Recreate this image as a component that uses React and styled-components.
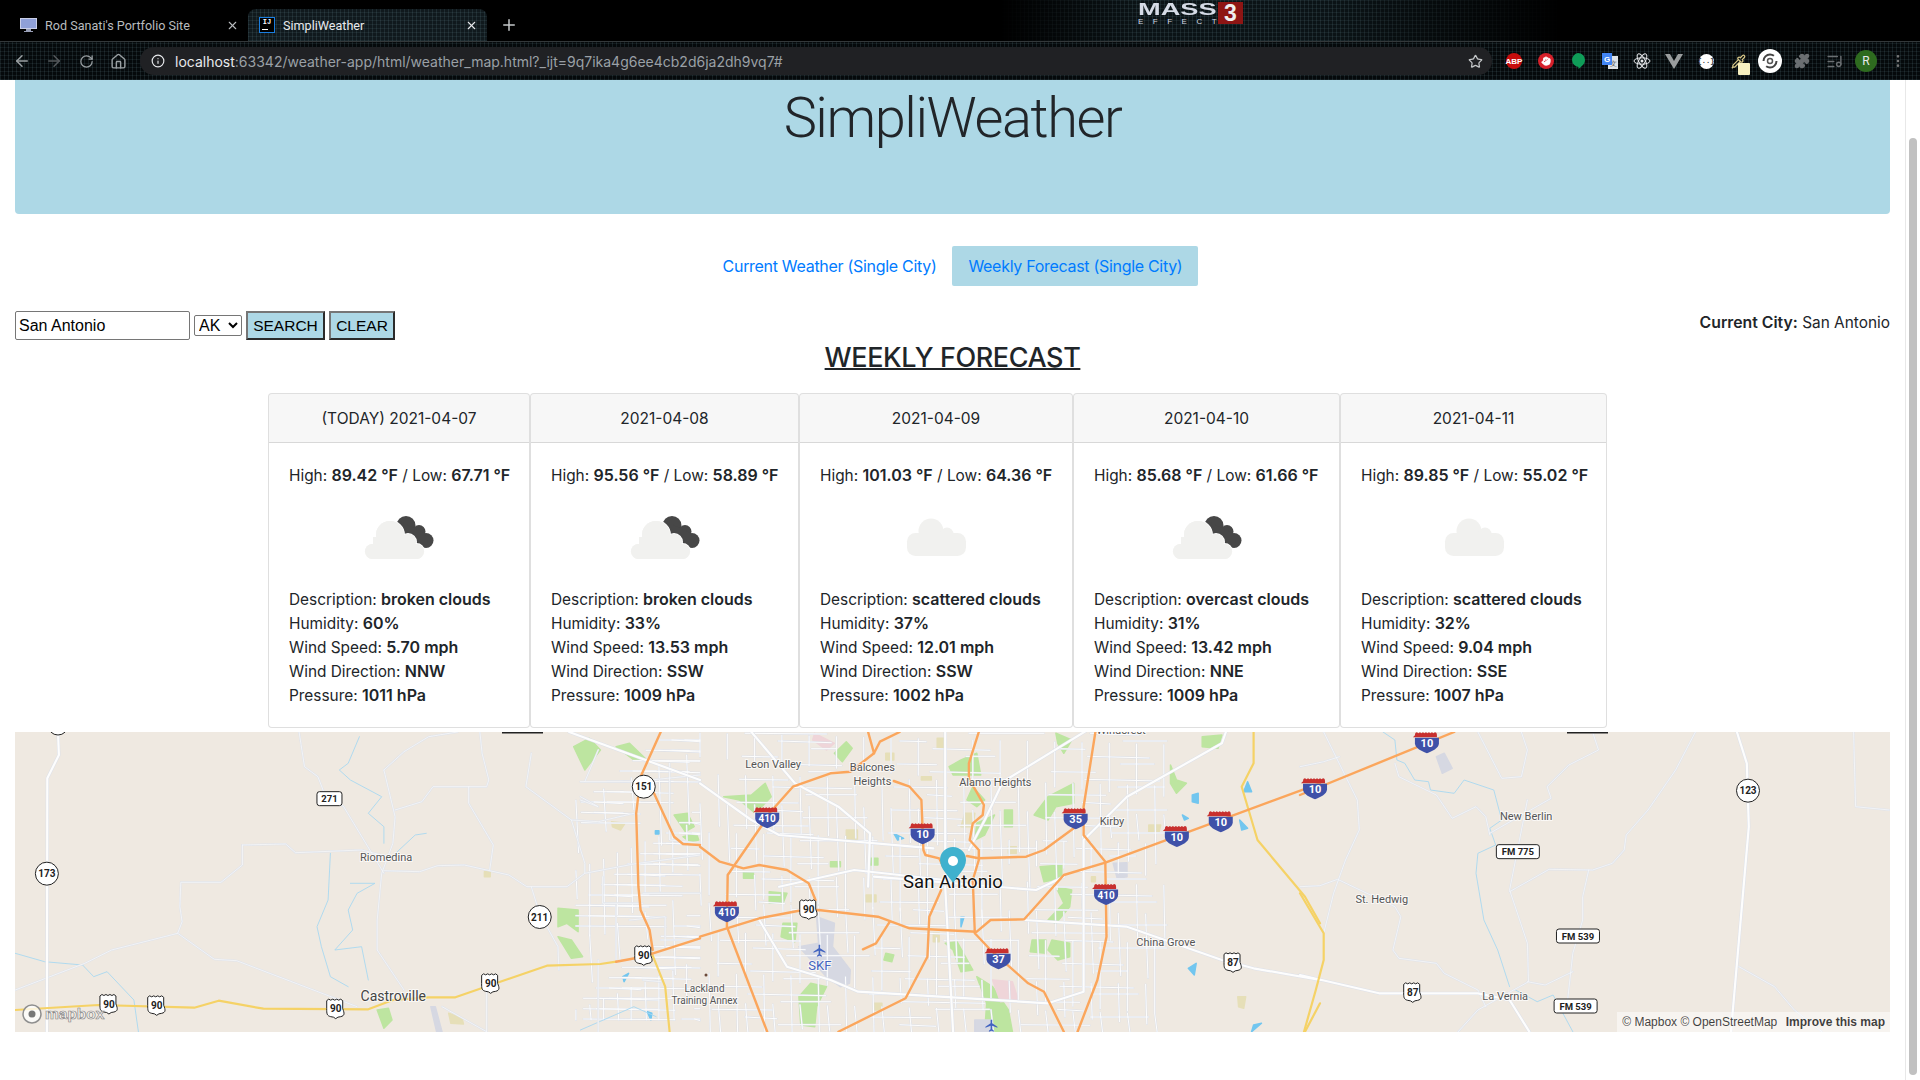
import React from "react";
import styled, { createGlobalStyle, css } from "styled-components";
import {
  ArrowLeft,
  ArrowRight,
  Hand,
  Home,
  Info,
  ListMusic,
  MoreVertical,
  Pipette,
  Plus,
  Puzzle,
  RotateCw,
  Star,
  X,
} from "lucide-react";

const GlobalStyle = createGlobalStyle`
  html, body { margin: 0; padding: 0; height: 100%; overflow: hidden; background: #fff; }
  body { font-family: Inter, "Liberation Sans", sans-serif; font-size: 16px; color: #212529; }
  * { box-sizing: border-box; }
`;

/* ---------- browser chrome ---------- */

const texture = css`
  background-color: #0b1316;
  background-image: repeating-linear-gradient(90deg, rgba(120, 160, 170, 0.14) 0 1px, transparent 1px 4px),
    repeating-linear-gradient(0deg, rgba(120, 160, 170, 0.11) 0 1px, transparent 1px 4px);
`;

const Chrome = styled.header`
  height: 80px;
  background: #000;
  position: relative;
`;

const TabStrip = styled.div`
  height: 42px;
  padding: 9px 0 0 8px;
  display: flex;
  align-items: stretch;
  border-bottom: 1px solid #33383a;
  background: #000;
  position: relative;
`;

const ThemeGlow = styled.div`
  position: absolute;
  top: 0;
  bottom: 0;
  left: 1000px;
  width: 560px;
  ${texture}
  mask-image: linear-gradient(90deg, transparent, #000 25%, #000 60%, transparent);
`;

const Tab = styled.div`
  width: ${(p) => (p.$active ? "239px" : "240px")};
  display: flex;
  align-items: center;
  padding: 0 9px 0 ${(p) => (p.$active ? "11px" : "12px")};
  gap: 8px;
  font: 12.600px Roboto, "Liberation Sans", sans-serif;
  color: ${(p) => (p.$active ? "#e8eaed" : "#b9bcbf")};
  border-radius: 8px 8px 0 0;
  position: relative;
  z-index: 1;
  ${(p) => p.$active && texture}
  ${(p) => p.$active && "background-color: #10191d;"}
`;

const TabTitle = styled.span`
  flex: 1;
  white-space: nowrap;
`;

const NewTab = styled.div`
  width: 44px;
  display: flex;
  align-items: center;
  justify-content: center;
  color: #c4c7c9;
  position: relative;
  z-index: 1;
`;

const IdeaIcon = styled.div`
  width: 16px;
  height: 16px;
  background: #000;
  border: 1px solid #1a7ee0;
  color: #fff;
  font: bold 7px/9px "Liberation Mono", monospace;
  text-align: center;
  position: relative;
  &::after {
    content: "";
    position: absolute;
    left: 2px;
    bottom: 2px;
    width: 6px;
    height: 1px;
    background: #fff;
  }
`;

const GameLogo = styled.div`
  position: absolute;
  left: 1138px;
  top: 2px;
  display: flex;
  gap: 2px;
  z-index: 1;
  color: #d6dbe6;
  font-family: "Liberation Sans", sans-serif;
  font-weight: bold;
`;

const LogoWords = styled.div`
  width: 78px;
  padding-top: 1px;
  font-size: 17px;
  line-height: 14px;
  span {
    display: block;
    transform: scaleX(1.600);
    transform-origin: left;
    white-space: nowrap;
  }
  small {
    display: block;
    font-size: 8px;
    line-height: 8px;
    letter-spacing: 9.500px;
    margin-top: 1px;
    font-weight: normal;
  }
`;

const LogoThree = styled.div`
  width: 25px;
  height: 22px;
  background: #8e1514;
  color: #eee;
  font-size: 23px;
  line-height: 22px;
  text-align: center;
`;

const Toolbar = styled.div`
  height: 38px;
  display: flex;
  align-items: center;
  padding: 0 6px;
  position: relative;
  ${texture}
  background-color: #05090b;
`;

const ToolButton = styled.div`
  width: 32px;
  height: 32px;
  flex: none;
  display: flex;
  align-items: center;
  justify-content: center;
  color: ${(p) => p.$color || "#9aa0a3"};
  position: relative;
`;

const Omnibox = styled.div`
  flex: 1;
  height: 28px;
  margin: 0 6px;
  border-radius: 14px;
  background: #202124;
  display: flex;
  align-items: center;
  padding: 0 9px 0 11px;
  gap: 10px;
  font: 14px Inter, Roboto, "Liberation Sans", sans-serif;
  color: #9aa0a6;
  white-space: nowrap;
  b { font-weight: 400; color: #e8eaed; }
`;

const UrlText = styled.span`
  flex: 1;
`;

const Badge = styled.div`
  width: ${(p) => p.$size || 16}px;
  height: ${(p) => p.$size || 16}px;
  border-radius: 50%;
  background: ${(p) => p.$bg};
  color: ${(p) => p.$color || "#fff"};
  display: flex;
  align-items: center;
  justify-content: center;
  font: ${(p) => p.$font || "bold 8px 'Liberation Sans', sans-serif"};
`;

const StickyNote = styled.div`
  position: absolute;
  left: 16px;
  top: 18px;
  width: 12px;
  height: 12px;
  background: #f7f0c0;
  border-radius: 1px;
`;

const Translate = () => (
  <svg width="18" height="18" viewBox="0 0 18 18">
    <rect x="7" y="4" width="10" height="13" fill="#dfe3e8" />
    <text x="12" y="14" fontSize="7" fontFamily="Liberation Sans" textAnchor="middle" fill="#555">文</text>
    <rect x="1" y="1" width="10" height="12" fill="#4285f4" />
    <text x="6" y="10" fontSize="8" fontWeight="bold" fontFamily="Liberation Sans" textAnchor="middle" fill="#fff">G</text>
  </svg>
);

const Hangouts = () => (
  <svg width="16" height="18" viewBox="0 0 16 18">
    <path d="M8 1a7 7 0 0 1 7 7c0 4-3.500 6.500-6.500 9v-2.100A7 7 0 0 1 8 1z" fill="#0f9d58" />
  </svg>
);

const ReactMark = () => (
  <svg width="18" height="18" viewBox="-9 -9 18 18" fill="none" stroke="#e8eaed" strokeWidth="1">
    <circle r="1.500" fill="#e8eaed" stroke="none" />
    <ellipse rx="8" ry="3.200" />
    <ellipse rx="8" ry="3.200" transform="rotate(60)" />
    <ellipse rx="8" ry="3.200" transform="rotate(120)" />
  </svg>
);

const VueMark = () => (
  <svg width="18" height="16" viewBox="0 0 18 16">
    <path d="M0 1h5l4 7 4-7h5L9 16z" fill="#9a9d9e" />
  </svg>
);

const SyncMark = () => (
  <svg width="24" height="24" viewBox="0 0 24 24">
    <circle cx="12" cy="12" r="12" fill="#fff" />
    <circle cx="12" cy="12" r="6.500" fill="none" stroke="#444" strokeWidth="2" strokeDasharray="14 6" />
    <circle cx="12" cy="12" r="2.500" fill="none" stroke="#555" strokeWidth="1.500" />
  </svg>
);

const Monitor = () => (
  <svg width="17" height="16" viewBox="0 0 17 16">
    <rect x="0" y="1" width="17" height="11" fill="#c9cfe8" />
    <rect x="1" y="2" width="15" height="9" fill="#8fa0d8" />
    <rect x="6" y="12" width="5" height="2" fill="#9aa0b8" />
    <rect x="4" y="14" width="9" height="1" fill="#9aa0b8" />
  </svg>
);

const BrowserChrome = () => (
  <Chrome>
    <TabStrip>
      <ThemeGlow />
      <Tab>
        <Monitor />
        <TabTitle>Rod Sanati's Portfolio Site</TabTitle>
        <X size={13} />
      </Tab>
      <Tab $active>
        <IdeaIcon>IJ</IdeaIcon>
        <TabTitle>SimpliWeather</TabTitle>
        <X size={13} />
      </Tab>
      <NewTab>
        <Plus size={18} />
      </NewTab>
      <GameLogo>
        <LogoWords>
          <span>MASS</span>
          <small>EFFECT</small>
        </LogoWords>
        <LogoThree>3</LogoThree>
      </GameLogo>
    </TabStrip>
    <Toolbar>
      <ToolButton><ArrowLeft size={18} /></ToolButton>
      <ToolButton $color="#55595c"><ArrowRight size={18} /></ToolButton>
      <ToolButton><RotateCw size={15} /></ToolButton>
      <ToolButton><Home size={17} /></ToolButton>
      <Omnibox>
        <Info size={14} color="#e8eaed" />
        <UrlText>
          <b>localhost</b>:63342/weather-app/html/weather_map.html?_ijt=9q7ika4g6ee4cb2d6ja2dh9vq7#
        </UrlText>
        <Star size={15} color="#c4c7c9" />
      </Omnibox>
      <ToolButton><Badge $bg="#c70d0d">ABP</Badge></ToolButton>
      <ToolButton><Badge $bg="#d6202a"><Hand size={10} fill="#fff" color="#fff" /></Badge></ToolButton>
      <ToolButton><Hangouts /></ToolButton>
      <ToolButton><Translate /></ToolButton>
      <ToolButton><ReactMark /></ToolButton>
      <ToolButton><VueMark /></ToolButton>
      <ToolButton><Badge $bg="#fff" $color="#333" $font="bold 7px 'Liberation Mono', monospace" $size={15}>{"{..}"}</Badge></ToolButton>
      <ToolButton $color="#d8c98a">
        <Pipette size={15} />
        <StickyNote />
      </ToolButton>
      <ToolButton><SyncMark /></ToolButton>
      <ToolButton $color="#6b6f72"><Puzzle size={16} fill="#6b6f72" /></ToolButton>
      <ToolButton $color="#6b6f72"><ListMusic size={17} /></ToolButton>
      <ToolButton><Badge $bg="#2e6b1f" $color="#e8eaed" $font="12px Roboto, sans-serif" $size={22}>R</Badge></ToolButton>
      <ToolButton $color="#777"><MoreVertical size={16} /></ToolButton>
    </Toolbar>
  </Chrome>
);

/* ---------- page ---------- */

const Viewport = styled.div`
  display: flex;
  height: 1000px;
`;

const Page = styled.main`
  flex: 1;
  min-width: 0;
  padding: 0 15px;
`;

const Scrollbar = styled.div`
  width: 15px;
  flex: none;
  border-left: 1px solid #e8e8e8;
  padding: 58px 3px 5px 3px;
`;

const ScrollThumb = styled.div`
  height: 100%;
  background: #c1c1c1;
  border-radius: 4px;
`;

const Hero = styled.section`
  height: 134px;
  background: #add8e6;
  border-radius: 0 0 4px 4px;
  text-align: center;
`;

const Title = styled.h1`
  margin: 0;
  font-family: Roboto, Inter, sans-serif;
  font-size: 56px;
  font-weight: 300;
  line-height: 76px;
  letter-spacing: -1.450px;
`;

const Nav = styled.nav`
  display: flex;
  justify-content: center;
  margin-top: 32px;
`;

const NavLink = styled.a`
  padding: 8px 16px;
  line-height: 24px;
  letter-spacing: -0.3px;
  color: #007bff;
  border-radius: 2px;
  background: ${(p) => (p.$active ? "#add8e6" : "transparent")};
`;

const SearchRow = styled.div`
  display: flex;
  justify-content: space-between;
  align-items: flex-start;
  margin-top: 25px;
`;

const SearchForm = styled.form`
  display: flex;
  align-items: center;
  gap: 4px;
  font-family: "Liberation Sans", Arial, sans-serif;
`;

const CityInput = styled.input`
  width: 175px;
  height: 29px;
  padding: 1px 3px;
  font: 16px "Liberation Sans", Arial, sans-serif;
  color: #000;
  border: 1px solid #767676;
  border-radius: 2px;
`;

const StateSelect = styled.select`
  width: 48px;
  height: 21px;
  font: 16px "Liberation Sans", Arial, sans-serif;
  color: #000;
  background: #fff;
  border: 1px solid #767676;
  border-radius: 2px;
`;

const FormButton = styled.button`
  height: 29px;
  width: ${(p) => p.$width}px;
  padding: 0;
  font: 15.500px "Liberation Sans", Arial, sans-serif;
  color: #000;
  background: #add8e6;
  border: 2px solid;
  border-color: #767676 #2b2b2b #2b2b2b #767676;
`;

const CurrentCity = styled.div`
  line-height: 24px;
  font-size: 15.400px;
  b { font-size: 15.800px; font-weight: 600; line-height: 1; }
`;

const Heading = styled.h2`
  margin: 1px 0 18px;
  text-align: center;
  font-size: 27px;
  line-height: 34px;
  font-weight: 500;
  letter-spacing: -0.4px;
  text-decoration: underline;
  text-decoration-thickness: 2px;
`;

const CardGroup = styled.div`
  display: grid;
  grid-template-columns: 262px 269px 274px 267px 267px;
  margin-left: 253px;
  width: 1339px;
`;

const Card = styled.article`
  border: 1px solid rgba(0, 0, 0, 0.125);
  border-radius: 4px;
  background: #fff;
  overflow: hidden;
`;

const CardHead = styled.div`
  height: 49px;
  line-height: 50px;
  text-align: center;
  background: rgba(0, 0, 0, 0.03);
  border-bottom: 1px solid rgba(0, 0, 0, 0.125);
  font-size: 15.500px;
`;

const CardBody = styled.div`
  padding: 21px 20px 19px;
  font-size: 15.400px;
  line-height: 24px;
  white-space: nowrap;
  b { font-size: 16px; font-weight: 600; line-height: 1; }
`;

const IconBox = styled.div`
  height: 100px;
  margin-top: -1px;
  margin-bottom: 1px;
  display: flex;
  justify-content: center;
`;

const Line = styled.div`
  height: 24px;
`;

/* icons as on openweathermap: 03d (scattered), 04d (broken) */
const WeatherIcon = ({ dark }) => (
  <svg width="100" height="100" viewBox="0 0 100 100">
    {dark ? (
      <g>
        <g fill="#474747">
          <circle cx="57" cy="38.500" r="9.500" />
          <circle cx="70" cy="44.500" r="6.500" />
          <circle cx="77" cy="53.500" r="7.500" />
          <path d="M50 34 L76 46 L80 60 L66 60 L46 44z" />
        </g>
        <g fill="#f1f1ef" stroke="#fff" strokeWidth="2" paintOrder="stroke">
          <circle cx="41" cy="48" r="14" />
          <circle cx="59" cy="55" r="8" />
          <rect x="16" y="57" width="59" height="15" rx="7.500" />
        </g>
        <g fill="#f1f1ef">
          <circle cx="41" cy="48" r="14" />
          <circle cx="59" cy="55" r="8" />
          <rect x="16" y="57" width="59" height="15" rx="7.500" />
          <rect x="24" y="50" width="40" height="15" />
        </g>
      </g>
    ) : (
      <g fill="#f1f1ef">
        <circle cx="45" cy="44" r="12.500" />
        <circle cx="61" cy="47" r="6.500" />
        <rect x="21" y="46" width="59" height="23" rx="8.500" />
      </g>
    )}
  </svg>
);

const days = [
  { date: "(TODAY) 2021-04-07", high: "89.42", low: "67.71", dark: true, desc: "broken clouds", hum: "60%", speed: "5.70 mph", dir: "NNW", press: "1011 hPa" },
  { date: "2021-04-08", high: "95.56", low: "58.89", dark: true, desc: "broken clouds", hum: "33%", speed: "13.53 mph", dir: "SSW", press: "1009 hPa" },
  { date: "2021-04-09", high: "101.03", low: "64.36", dark: false, desc: "scattered clouds", hum: "37%", speed: "12.01 mph", dir: "SSW", press: "1002 hPa" },
  { date: "2021-04-10", high: "85.68", low: "61.66", dark: true, desc: "overcast clouds", hum: "31%", speed: "13.42 mph", dir: "NNE", press: "1009 hPa" },
  { date: "2021-04-11", high: "89.85", low: "55.02", dark: false, desc: "scattered clouds", hum: "32%", speed: "9.04 mph", dir: "SSE", press: "1007 hPa" },
];

/* ---------- map ---------- */

const MapBox = styled.section`
  margin-top: 4px;
  height: 300px;
  background: #efe9e1;
  position: relative;
  overflow: hidden;
  svg { display: block; }
`;

const Attribution = styled.div`
  position: absolute;
  right: 0;
  bottom: 0;
  height: 20px;
  padding: 0 5px;
  background: rgba(255, 255, 255, 0.5);
  font: 12px/20px "Liberation Sans", Arial, sans-serif;
  color: rgba(0, 0, 0, 0.75);
  b { margin-left: 5px; }
`;

// coordinates below were read off three crops of the map, each with its own scale
const zones = { a: [0, 2.24], b: [700, 2.529], c: [1300, 2.529] };
const at = (z, x, y) => [zones[z][0] + x / zones[z][1], 720 + y / 3];
const pts = (z, s) =>
  s
    .trim()
    .split(/\s+/)
    .map((p) => {
      const [x, y] = p.split(",").map(Number);
      return at(z, x, y).map((n) => n.toFixed(1)).join(",");
    })
    .join(" ");

const minor = {
  a: [
    "670,36 682,140 712,170 725,215 770,260 815,360 860,460",
    "543,375 640,372 662,398 810,390 870,410",
    "543,375 543,435 495,487 405,487 403,560 408,605 398,640 250,690 190,730 34,810",
    "398,640 480,718 530,722 800,860",
    "860,150 885,290 880,370 855,460 845,600 845,690 905,810",
    "860,452 940,455 980,437 1040,435 1140,465 1180,500 1270,500 1310,460 1420,432 1568,405",
    "1190,500 1205,565",
    "885,270 945,245 970,200 1090,200 1095,180 1080,100 1075,36",
    "860,150 905,95 960,50 1025,36",
    "1050,200 1050,250 1105,375 1097,450",
    "1190,100 1178,200 1280,300 1310,430 1310,460",
    "1280,300 1340,305 1420,280",
    "1340,720 1340,935",
    "1090,815 1090,935",
    "990,860 1090,935",
    "1225,620 1250,680 1252,750",
    "1350,470 1350,550 1440,550",
    "1300,185 1420,185 1568,165",
    "1340,90 1310,185",
    "1440,780 1480,785",
    "1380,555 1380,720",
    "1480,660 1568,660",
    "1410,600 1490,590 1490,680",
    "1500,130 1500,360 1568,370",
    "1440,520 1568,520",
    "1300,240 1340,260 1300,230",
  ],
  c: [
    "60,36 145,240 150,330 115,420 85,520 60,640",
    "0,500 50,497 95,478 240,560 255,590 235,690 250,715 345,730 365,760 450,810 470,860",
    "450,36 510,175 560,170 575,90 560,36",
    "575,240 530,510 575,670 578,785 540,810 450,870 400,935",
    "530,515 630,448 740,450 790,430 820,390 825,345 880,270 950,150 1000,36",
    "730,450 715,530 715,600 690,700 675,860",
    "575,785 620,795 690,755",
    "480,340 635,235 625,200 680,135 755,90 740,36",
    "1110,740 1200,800 1250,870 1320,935",
    "1400,36 1405,260 1490,270",
    "0,140 60,125 100,110",
    "240,130 250,170 345,225 385,295 445,260 470,290 480,345",
  ],
};

const major = {
  a: ["130,36 132,105 106,175 105,935", "1275,36 1568,180"],
  b: [
    "0,190 130,300 200,345 590,385",
    "130,36 240,190 350,260 430,340 425,500",
    "200,500 390,450 620,480",
    "440,470 850,510 920,470",
    "150,600 220,740 330,780 400,815 880,850 970,815 970,360 1080,230 1320,70 1330,36",
    "820,600 1080,620 1320,720 1400,745 1568,780",
    "760,200 720,300 680,390",
    "980,30 760,190",
    "620,36 620,400",
    "620,500 640,935",
  ],
  c: ["0,765 200,820 450,820 530,840 580,935", "1105,36 1130,130 1135,320 1090,935"],
};

const water = {
  a: [
    "805,50 780,130 760,150 785,180 855,230 825,280 860,320 860,370",
    "740,400 735,540 710,620 720,680 740,770 780,800",
    "785,490 840,490 800,520 780,570 790,630 750,690 810,680 825,780",
    "955,340 930,345 870,420",
    "34,700 100,725 185,735 210,770 240,755 300,840 310,935",
    "1300,930 1420,860 1470,890",
  ],
  c: [
    "210,36 240,60 245,120 265,130 290,180 325,185 330,210 390,220 415,180 490,210 510,300 480,325 495,375 450,400 445,460 465,600 500,690 530,800",
    "545,810 600,845 640,825 690,935",
  ],
};

const orange = {
  a: [
    "1380,725 1440,710 1568,655",
    "1480,36 1435,170 1425,280 1430,500 1435,570 1455,630 1462,690",
    "1465,220 1510,350 1530,372 1568,375",
  ],
  b: [
    "425,36 440,100 455,65 505,36",
    "160,300 235,200 330,160 380,155 440,100",
    "490,183 530,200 560,240 565,390 570,405 605,415 615,440 640,470",
    "705,36 680,130 680,175 718,255 715,285 690,310 682,360 705,390 705,420 690,480 695,640 735,690 830,790 870,815 920,935",
    "675,408 705,415 825,410 870,390 945,325",
    "1000,36 970,260 970,345 1025,425 1028,650 1005,780 955,935",
    "0,650 150,595 250,572 300,570 450,590 530,625 700,635 735,600 820,598 920,465 1025,428 1568,190",
    "160,310 70,465 68,620 170,935",
    "0,380 50,425 110,445 150,435 220,450 275,490 292,540",
    "480,605 445,670 412,688",
    "610,510 580,590 575,710 520,835 350,935",
  ],
  c: ["0,225 390,36"],
};

const yellow = {
  a: [
    "34,870 220,855 435,863 490,842 590,866 825,868 880,840 960,832 1020,832 1225,737 1345,732 1380,725",
    "1460,700 1490,800 1500,935",
  ],
  b: ["1400,36 1400,130 1370,200 1410,360 1530,530 1568,610", "1530,935 1568,850"],
  c: ["0,520 60,640 60,720 40,810 10,935"],
};

const areas = [
  ["#bde5a0", "a", ["1285,80 1320,55 1345,90 1310,150", "1380,80 1410,70 1445,115 1420,120", "1510,285 1540,280 1555,320 1535,335", "1530,350 1560,340 1565,360 1545,365", "1250,565 1295,570 1295,635 1270,610 1250,620", "1250,650 1280,660 1305,710 1280,715", "845,870 870,865 878,900 860,925"]],
  ["#bde5a0", "b", ["340,100 370,65 385,85 360,125", "60,230 130,225 165,190 180,230 140,280 100,240", "660,120 700,100 710,165 640,165 630,140", "690,200 720,240 700,260 675,240", "700,310 745,285 720,345 695,360", "770,270 790,270 790,320 770,320", "880,230 945,190 945,250 900,260 880,300 845,285", "900,40 940,60 920,100 905,70", "860,440 915,435 915,475 870,485", "900,500 940,510 935,560 900,610 880,600 920,550", "840,660 875,660 875,700 835,695", "890,660 935,670 935,710 905,720 880,690", "175,515 220,520 210,550 175,550", "210,610 245,610 240,665 205,650", "620,670 650,665 690,750 660,755 640,690", "700,770 740,800 780,870 790,935 720,935 725,850", "280,790 320,800 295,860 290,920 255,915 250,830", "1190,135 1205,180 1230,190 1205,220 1190,190", "1270,50 1320,45 1310,85 1270,80", "470,700 490,705 485,725 465,720", "330,425 355,425 355,440 330,440", "430,415 450,415 450,435 430,435", "110,455 135,455 135,475 110,475"]],
  ["#e6dfb8", "a", ["1370,305 1400,310 1390,330 1372,320", "1005,880 1035,895 1038,912 1010,910", "1085,455 1098,455 1098,470 1085,470"]],
  ["#e6dfb8", "b", ["370,330 398,330 398,360 370,360", "1135,315 1165,315 1160,340 1135,340", "990,470 1000,470 1000,485 990,485", "600,55 618,55 618,85 600,85", "670,280 695,280 690,320 660,320", "420,525 445,525 445,545 420,545", "1360,830 1380,830 1375,865 1362,860", "470,100 490,100 490,120 470,120", "560,170 585,170 585,180 560,180", "440,850 460,850 460,870 440,870", "590,640 605,640 605,665 590,665", "780,380 800,380 800,400 780,400"]],
  ["#efd5d9", "b", ["740,780 790,785 805,840 760,845", "290,40 340,70 320,90 285,60"]],
  ["#d6d8e2", "a", ["965,860 975,860 990,935 978,935"]],
  ["#d6d8e2", "b", ["295,590 340,610 335,680 380,750 378,790 355,800 320,770 250,680 300,670", "695,900 735,900 740,935 695,935", "1045,430 1080,428 1080,470 1055,475"]],
  ["#d6d8e2", "c", ["345,110 365,100 385,145 360,160"]],
  ["#72c6ef", "b", ["1385,185 1395,215 1375,215", "1245,225 1260,220 1260,250 1245,245", "1220,285 1235,295 1225,300", "1365,300 1385,325 1370,330", "1235,745 1255,730 1250,765", "660,590 668,590 660,620", "1400,915 1420,910 1395,935", "490,340 515,355 500,360"]],
  ["#72c6ef", "a", ["1450,875 1460,880 1458,900", "1395,770 1408,760 1398,785", "1468,332 1476,332 1476,342 1468,342"]],
];

// the dense street grid of the city: short segments spread by a fixed formula
const streets = (x0, x1, y0, y1, step) => {
  const out = [];
  for (let x = x0; x < x1; x += step) {
    for (let k = 0; k < 3; k++) {
      const top = y0 + ((x * 13 + k * 211) % (y1 - y0));
      const len = 70 + ((x * 5 + k * 97) % 170);
      out.push(`${x},${top} ${x + (k * 6) % 9},${Math.min(y1, top + len)}`);
    }
  }
  for (let y = y0; y < y1; y += step) {
    for (let k = 0; k < 3; k++) {
      const left = x0 + ((y * 17 + k * 307) % (x1 - x0));
      const len = 60 + ((y * 7 + k * 83) % 150);
      out.push(`${left},${y} ${Math.min(x1, left + len)},${y + (k * 5) % 8}`);
    }
  }
  return out;
};

const cityGrid = { a: streets(1290, 1568, 60, 900, 31), b: streets(0, 1180, 40, 935, 23) };

const Roads = ({ sets, stroke, width, fill = "none" }) =>
  Object.entries(sets).map(([z, list]) =>
    list.map((s, i) => (
      <polyline key={z + i} points={pts(z, s)} fill={fill} stroke={stroke} strokeWidth={width} strokeLinejoin="round" strokeLinecap="round" />
    ))
  );

const ShieldText = styled.text`
  font-family: Roboto, "Liberation Sans", sans-serif;
  font-weight: 700;
  font-size: ${(p) => p.$size || 9}px;
  text-anchor: middle;
  fill: ${(p) => p.$fill || "#222"};
`;

const Interstate = ({ z, x, y, n }) => {
  const [cx, cy] = at(z, x, y);
  return (
    <g transform={`translate(${cx} ${cy})`}>
      <path d="M-12 -7 q0 -3 2 -3 l1.500 1 1.500 -1 1.500 1 1.500 -1 1.500 1 1.500 -1 1.500 1 1.500 -1 1.500 1 1.500 -1 1.500 1 1.500 -1 q2 0 2 3 v2 h-24z" fill="#c8302e" />
      <path d="M-12 -4.500 H12 V1 C12 6 5 9 0 11 C-5 9 -12 6 -12 1z" fill="#3f51a8" />
      <ShieldText y="4.500" $fill="#fff" $size={n.length > 2 ? 10 : 11}>{n}</ShieldText>
    </g>
  );
};

const UsRoute = ({ z, x, y, n }) => {
  const [cx, cy] = at(z, x, y);
  return (
    <g transform={`translate(${cx} ${cy})`}>
      <path d="M-9 -8 l2 -1.500 2 1 2 -1 2 1 2 -1 2 1 2 -1 2 1.500 V0 C9 5 9 7 5 8 Q2 8 0 10 Q-2 8 -5 8 C-9 7 -9 5 -9 0z" fill="#fff" stroke="#222" strokeWidth="1" />
      <ShieldText y="3.500" $size={10}>{n}</ShieldText>
    </g>
  );
};

const StateRoute = ({ z, x, y, n }) => {
  const [cx, cy] = at(z, x, y);
  return (
    <g transform={`translate(${cx} ${cy})`}>
      <circle r="11.500" fill="#fff" stroke="#222" strokeWidth="1" />
      <ShieldText y="3.500" $size={10}>{n}</ShieldText>
    </g>
  );
};

const FarmRoad = ({ z, x, y, n, w }) => {
  const [cx, cy] = at(z, x, y);
  return (
    <g transform={`translate(${cx} ${cy})`}>
      <rect x={-w / 2} y="-7" width={w} height="14" rx="2.500" fill="#fff" stroke="#222" strokeWidth="1" />
      <ShieldText y="3.500" $size={9.500}>{n}</ShieldText>
    </g>
  );
};

const Place = styled.text`
  font-family: Roboto, "Liberation Sans", sans-serif;
  font-size: ${(p) => p.$size || 11}px;
  text-anchor: middle;
  fill: ${(p) => p.$fill || "#555"};
  stroke: rgba(255, 255, 255, 0.7);
  stroke-width: 2px;
  paint-order: stroke;
`;

const places = [
  ["a", 865, 423, "Riomedina"],
  ["a", 881, 844, "Castroville", 14, "#444"],
  ["b", 185, 145, "Leon Valley"],
  ["b", 436, 153, "Balcones"],
  ["b", 436, 194, "Heights"],
  ["b", 747, 197, "Alamo Heights"],
  ["b", 1042, 315, "Kirby"],
  ["b", 303, 749, "SKF", 13, "#4264c0"],
  ["b", 1178, 679, "China Grove"],
  ["a", 1578, 815, "Lackland", 10],
  ["a", 1578, 851, "Training Annex", 10],
  ["b", 1065, 42, "Windcrest"],
  ["c", 572, 301, "New Berlin"],
  ["c", 207, 550, "St. Hedwig"],
  ["c", 519, 841, "La Vernia"],
];

const Plane = ({ z, x, y }) => {
  const [cx, cy] = at(z, x, y);
  return <path transform={`translate(${cx} ${cy})`} d="M-.8 -6 h1.600 v3.500 L6 1 v1.200 L.8 0 v3.500 L2.500 5 v1 L0 5 -2.500 6 v-1 L-.8 3.500 V0 L-6 2.200 V1 L-.8 -2.500z" fill="#4264c0" />;
};

const MapDrawing = () => (
  <svg width="1875" height="300" viewBox="15 732 1875 300">
    {areas.map(([fill, z, list]) =>
      list.map((s, i) => (
        <polygon key={fill + z + i} points={pts(z, s)} fill={fill} stroke={fill} strokeWidth="1.500" strokeLinejoin="round" />
      ))
    )}
    <Roads sets={cityGrid} stroke="#d9dee8" width={1.800} />
    <Roads sets={cityGrid} stroke="#fdfdfd" width={1} />
    <Roads sets={water} stroke="#a8d8f0" width={0.9} />
    <Roads sets={minor} stroke="#dfe3eb" width={1.900} />
    <Roads sets={minor} stroke="#f8f8f8" width={0.8} />
    <Roads sets={major} stroke="#dde1e9" width={3.200} />
    <Roads sets={major} stroke="#fdfdfd" width={2.200} />
    <Roads sets={yellow} stroke="#f5d266" width={2.200} />
    <Roads sets={orange} stroke="#fba65c" width={2.400} />

    <rect x="502" y="732" width="41" height="1.500" fill="#222" />
    <rect x="1567" y="732" width="41" height="1.500" fill="#222" />
    <circle cx="58" cy="725" r="10" fill="#fff" stroke="#222" />

    {places.map(([z, x, y, label, size, fill]) => {
      const [px, py] = at(z, x, y);
      return <Place key={label} x={px} y={py} $size={size} $fill={fill}>{label}</Place>;
    })}

    <circle cx="706" cy="975" r="1.500" fill="#6b4a3a" />
    <Plane z="b" x={302} y={692} />
    <Plane z="b" x={737} y={917} />

    {[["a", 1442, 200, "151"], ["a", 105, 461, "173"], ["a", 1209, 591, "211"], ["c", 1133, 212, "123"]].map(([z, x, y, n]) => (
      <StateRoute key={n} z={z} x={x} y={y} n={n} />
    ))}
    <FarmRoad z="a" x={738} y={236} n="271" w={25} />
    <FarmRoad z="c" x={551} y={395} n="FM 775" w={43} />
    <FarmRoad z="c" x={703} y={648} n="FM 539" w={43} />
    <FarmRoad z="c" x={697} y={858} n="FM 539" w={43} />
    {[["a", 244, 852, "90"], ["a", 351, 856, "90"], ["a", 752, 866, "90"], ["a", 1099, 790, "90"], ["a", 1442, 706, "90"], ["b", 275, 568, "90"], ["b", 1348, 727, "87"], ["c", 285, 817, "87"]].map(([z, x, y, n]) => (
      <UsRoute key={`${z}${x}`} z={z} x={x} y={y} n={n} />
    ))}
    {[["b", 170, 292, "410"], ["b", 563, 340, "10"], ["b", 950, 295, "35"], ["b", 1206, 348, "10"], ["b", 1317, 304, "10"], ["b", 1027, 522, "410"], ["b", 68, 574, "410"], ["b", 755, 715, "37"], ["c", 321, 67, "10"], ["c", 38, 205, "10"]].map(([z, x, y, n]) => (
      <Interstate key={`${z}${x}`} z={z} x={x} y={y} n={n} />
    ))}

    <Place x="953" y="888" $size={18.500} $fill="#111">San Antonio</Place>
    <path d="M953 883 C949 876 940 869 940 860 A13 13 0 0 1 966 860 C966 869 957 876 953 883z" fill="#3fb1ce" />
    <circle cx="953" cy="861" r="5" fill="#fff" />

    <circle cx="32" cy="1014" r="9" fill="rgba(255,255,255,.75)" stroke="#8f8f8f" strokeWidth="1.500" />
    <circle cx="32" cy="1014" r="3.500" fill="#777" />
    <text x="45" y="1019" fontFamily="Liberation Sans, sans-serif" fontSize="15.500" fontWeight="700" fill="rgba(255,255,255,.65)" stroke="#888" strokeWidth=".7">mapbox</text>
  </svg>
);

export default function App() {
  return (
    <>
      <GlobalStyle />
      <BrowserChrome />
      <Viewport>
        <Page>
          <Hero>
            <Title>SimpliWeather</Title>
          </Hero>
          <Nav>
            <NavLink>Current Weather (Single City)</NavLink>
            <NavLink $active>Weekly Forecast (Single City)</NavLink>
          </Nav>
          <SearchRow>
            <SearchForm>
              <CityInput defaultValue="San Antonio" />
              <StateSelect defaultValue="AK">
                <option>AK</option>
              </StateSelect>
              <FormButton type="button" $width={79}>SEARCH</FormButton>
              <FormButton type="button" $width={66}>CLEAR</FormButton>
            </SearchForm>
            <CurrentCity>
              <b>Current City:</b> San Antonio
            </CurrentCity>
          </SearchRow>
          <Heading>WEEKLY FORECAST</Heading>
          <CardGroup>
            {days.map((d) => (
              <Card key={d.date}>
                <CardHead>{d.date}</CardHead>
                <CardBody>
                  <Line>
                    High: <b>{d.high} °F</b> / Low: <b>{d.low} °F</b>
                  </Line>
                  <IconBox>
                    <WeatherIcon dark={d.dark} />
                  </IconBox>
                  <Line>Description: <b>{d.desc}</b></Line>
                  <Line>Humidity: <b>{d.hum}</b></Line>
                  <Line>Wind Speed: <b>{d.speed}</b></Line>
                  <Line>Wind Direction: <b>{d.dir}</b></Line>
                  <Line>Pressure: <b>{d.press}</b></Line>
                </CardBody>
              </Card>
            ))}
          </CardGroup>
          <MapBox>
            <MapDrawing />
            <Attribution>
              © Mapbox © OpenStreetMap <b>Improve this map</b>
            </Attribution>
          </MapBox>
        </Page>
        <Scrollbar>
          <ScrollThumb />
        </Scrollbar>
      </Viewport>
    </>
  );
}
